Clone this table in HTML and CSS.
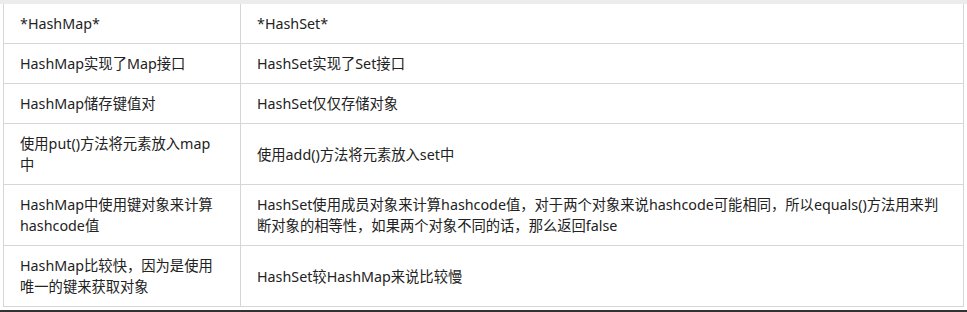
FILE: index.html
```html
<!DOCTYPE html>
<html lang="zh-CN">
<head>
<meta charset="utf-8">
<title>HashMap vs HashSet</title>
<link rel="stylesheet" href="styles.css">
</head>
<body>
<div class="top-band"></div>
<table class="cmp">
  <colgroup><col class="c1"><col class="c2"></colgroup>
  <tr><td class="key">*HashMap*</td><td>*HashSet*</td></tr>
  <tr><td class="key">HashMap实现了Map接口</td><td>HashSet实现了Set接口</td></tr>
  <tr><td class="key">HashMap储存键值对</td><td>HashSet仅仅存储对象</td></tr>
  <tr><td class="key">使用put()方法将元素放入map中</td><td>使用add()方法将元素放入set中</td></tr>
  <tr><td class="key">HashMap中使用键对象来计算hashcode值</td><td>HashSet使用成员对象来计算hashcode值，对于两个对象来说hashcode可能相同，所以equals()方法用来判断对象的相等性，如果两个对象不同的话，那么返回false</td></tr>
  <tr><td class="key">HashMap比较快，因为是使用唯一的键来获取对象</td><td>HashSet较HashMap来说比较慢</td></tr>
</table>
<div class="bottom-bar"></div>
</body>
</html>
```
FILE: styles.css
```css
html, body {
  margin: 0;
  padding: 0;
  background: #fff;
}
body {
  width: 967px;
  height: 312px;
  overflow: hidden;
  font-family: "Noto Sans", "Noto Sans CJK SC", sans-serif;
  font-size: 14.3px;
  color: #222;
}
.top-band {
  height: 4px;
  background: #ececec;
}
.cmp {
  margin-left: 3px;
  width: 961px;
  border-collapse: collapse;
  table-layout: fixed;
}
.c1 { width: 237px; }
.cmp td {
  border: 1px solid #d6d6d6;
  padding: 9px 16px 9px 16px;
  line-height: 21px;
  vertical-align: middle;
}
.cmp td.key {
  padding-right: 24px;
}
.cmp tr:first-child td {
  border-top: none;
}
.bottom-bar {
  margin-top: 3px;
  height: 3px;
  background: #333;
}
```
